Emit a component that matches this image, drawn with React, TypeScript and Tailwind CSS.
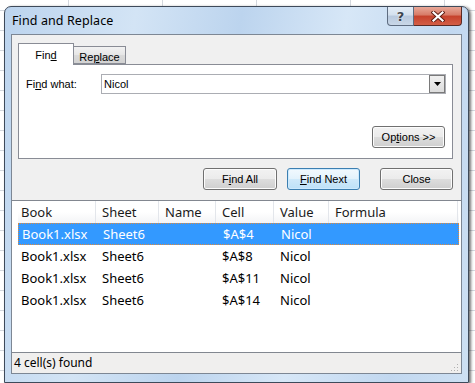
import React from "react";

const rows = [
  { book: "Book1.xlsx", sheet: "Sheet6", cell: "$A$4", value: "Nicol" },
  { book: "Book1.xlsx", sheet: "Sheet6", cell: "$A$8", value: "Nicol" },
  { book: "Book1.xlsx", sheet: "Sheet6", cell: "$A$11", value: "Nicol" },
  { book: "Book1.xlsx", sheet: "Sheet6", cell: "$A$14", value: "Nicol" },
];

function Btn({ children, focused, w }: { children: React.ReactNode; focused?: boolean; w: string }) {
  return (
    <div
      className={`${w} h-[22px] rounded-[3px] border flex items-center justify-center text-[11px] text-black ${
        focused
          ? "border-[#3c7fb1] bg-[linear-gradient(180deg,#f2f9fe_0%,#e3f2fc_50%,#cfe9fa_51%,#bde1f8_100%)] shadow-[inset_0_0_0_1px_#cdeafe]"
          : "border-[#707070] bg-[linear-gradient(180deg,#f2f2f2_0%,#ebebeb_50%,#dddddd_51%,#cfcfcf_100%)] shadow-[inset_0_0_0_1px_#fcfcfc]"
      }`}
    >
      {children}
    </div>
  );
}

function Col({ w, first, children, header }: { w: string; first?: boolean; children?: React.ReactNode; header?: boolean }) {
  return (
    <div
      className={`${w} shrink-0 h-full flex items-center pt-[2px] ${first ? "pl-[3px]" : "pl-[6px]"} ${
        header ? "border-r border-[#e3e6eb]" : ""
      }`}
    >
      {children}
    </div>
  );
}

export default function App() {
  return (
    <div className="w-[475px] h-[383px] overflow-hidden bg-white bg-[linear-gradient(to_right,#d4d8de_1px,transparent_1px),linear-gradient(to_bottom,#d4d8de_1px,transparent_1px)] bg-size-[94px_20px] bg-position-[68px_10px] pt-[6px] pl-[4px]">
      <div className="w-[465px] h-[377px] rounded-t-[7px] border border-[#3e4a5a] bg-[linear-gradient(100deg,#bcd4ee_0%,#d3e4f5_25%,#bcd4ee_45%,#d7e7f7_65%,#c2d8f0_85%,#cde0f3_100%)] shadow-[2px_1px_3px_rgba(0,0,0,0.55)] px-[6px] pb-[8px] flex flex-col font-['Liberation_Sans',sans-serif]">
        {/* title bar */}
        <div className="h-[27px] shrink-0 flex items-start">
          <div className="flex-1 pl-[1px] pt-[5px] text-[12.5px] text-black font-['Noto_Sans',sans-serif] tracking-[0.1px]">
            Find and Replace
          </div>
          <div className="flex items-start">
            <div className="w-[27px] h-[19px] rounded-bl-[4px] border border-t-0 border-[#5e6c80] bg-[linear-gradient(180deg,#e4edf7_0%,#d3e0ee_45%,#b8c9de_50%,#c9d7e8_100%)] flex items-center justify-center">
              <span className="text-[13px] font-bold text-[#3d4550] leading-none [text-shadow:0_0_2px_#ffffff] font-['DejaVu_Sans',sans-serif]">
                ?
              </span>
            </div>
            <div className="w-[48px] h-[19px] rounded-br-[4px] border border-t-0 border-l-0 border-[#5a2a24] bg-[linear-gradient(180deg,#e8a898_0%,#d77a66_45%,#c6412b_50%,#d35e46_100%)] flex items-center justify-center">
              <svg width="14" height="11" viewBox="0 0 14 11">
                <path d="M2.5 1.5 L11.5 9.5 M11.5 1.5 L2.5 9.5" stroke="#5b1b12" strokeWidth="4" strokeLinecap="square" />
                <path d="M2.5 1.5 L11.5 9.5 M11.5 1.5 L2.5 9.5" stroke="#ffffff" strokeWidth="2.2" strokeLinecap="square" />
              </svg>
            </div>
          </div>
        </div>

        {/* client area */}
        <div className="flex-1 border border-[#7d8794] bg-[#f0f0f0] flex flex-col">
          <div className="pl-[6px] pt-[8px]">
            <div className="flex items-end h-[21px] relative z-10">
              <div className="w-[56px] h-[22px] mb-[-1px] bg-white border border-b-0 border-[#898c95] flex items-start justify-center pt-[3px] text-[11px] text-black">
                <span>
                  Fin<span className="underline">d</span>
                </span>
              </div>
              <div className="w-[52px] h-[18px] border border-l-0 border-[#898c95] bg-[linear-gradient(180deg,#f2f2f2_0%,#e6e6e6_50%,#dadada_51%,#d2d2d2_100%)] flex items-start justify-center pt-[2px] text-[11px] text-black">
                <span>
                  Re<span className="underline">p</span>lace
                </span>
              </div>
            </div>
            <div className="w-[435px] h-[95px] border border-[#898c95] bg-white flex flex-col">
              <div className="flex items-center mt-[9px] pl-[7px] pr-[6px]">
                <div className="w-[75px] text-[11px] text-black">
                  Fi<span className="underline">n</span>d what:
                </div>
                <div className="flex-1 h-[20px] border border-[#abadb3] bg-white flex items-center">
                  <span className="flex-1 pl-[2px] text-[11px] text-black">Nicol</span>
                  <div className="w-[16px] h-[18px] border border-[#7a7a7a] bg-[linear-gradient(180deg,#f0f0f0_0%,#dcdcdc_100%)] flex items-center justify-center">
                    <svg width="7" height="4" viewBox="0 0 7 4">
                      <path d="M0 0 H7 L3.5 4 Z" fill="#000" />
                    </svg>
                  </div>
                </div>
              </div>
              <div className="flex-1" />
              <div className="flex justify-end pr-[7px] mb-[10px]">
                <Btn w="w-[73px]">
                  <span>
                    Op<span className="underline">t</span>ions &gt;&gt;
                  </span>
                </Btn>
              </div>
            </div>
          </div>

          <div className="flex justify-end mt-[9px] pr-[8px]">
            <Btn w="w-[74px]">
              <span>
                F<span className="underline">i</span>nd All
              </span>
            </Btn>
            <div className="w-[10px]" />
            <Btn w="w-[73px]" focused>
              <span>
                <span className="underline">F</span>ind Next
              </span>
            </Btn>
            <div className="w-[20px]" />
            <Btn w="w-[73px]">
              <span>Close</span>
            </Btn>
          </div>

          {/* results list */}
          <div className="flex-1 mt-[10px] border-t border-b border-[#828790] bg-white pl-[6px] pr-[2px] flex flex-col text-[13px] font-['Noto_Sans',sans-serif]">
            <div className="h-[22px] flex bg-[linear-gradient(180deg,#ffffff_0%,#ffffff_50%,#f3f4f6_100%)] text-[#1a1a1a]">
              <Col w="w-[78px]" first header>Book</Col>
              <Col w="w-[63px]" header>Sheet</Col>
              <Col w="w-[57px]" header>Name</Col>
              <Col w="w-[58px]" header>Cell</Col>
              <Col w="w-[55px]" header>Value</Col>
              <Col w="w-[129px]" header>Formula</Col>
            </div>
            {rows.map((r, i) => (
              <div
                key={i}
                className={`h-[22px] flex w-[441px] ${
                  i === 0 ? "bg-[#3399ff] text-white border border-dotted border-[#e0893a]" : "text-black"
                }`}
              >
                <Col w="w-[78px]" first>{r.book}</Col>
                <Col w="w-[63px]">{r.sheet}</Col>
                <Col w="w-[57px]" />
                <Col w="w-[58px]">{r.cell}</Col>
                <Col w="w-[55px]">{r.value}</Col>
                <Col w="flex-1" />
              </div>
            ))}
          </div>

          {/* status bar */}
          <div className="h-[20px] shrink-0 bg-[#f0efee] flex items-center justify-between pl-[2px] pr-[2px] text-[12px] text-black font-['Noto_Sans',sans-serif]">
            <span>4 cell(s) found</span>
            <svg width="10" height="10" viewBox="0 0 10 10" className="self-end mb-[1px]">
              <rect x="8" y="2" width="1" height="1" fill="#b0b0b0" />
              <rect x="5" y="5" width="1" height="1" fill="#b0b0b0" />
              <rect x="8" y="5" width="1" height="1" fill="#b0b0b0" />
              <rect x="2" y="8" width="1" height="1" fill="#b0b0b0" />
              <rect x="5" y="8" width="1" height="1" fill="#b0b0b0" />
              <rect x="8" y="8" width="1" height="1" fill="#b0b0b0" />
            </svg>
          </div>
        </div>
      </div>
    </div>
  );
}
